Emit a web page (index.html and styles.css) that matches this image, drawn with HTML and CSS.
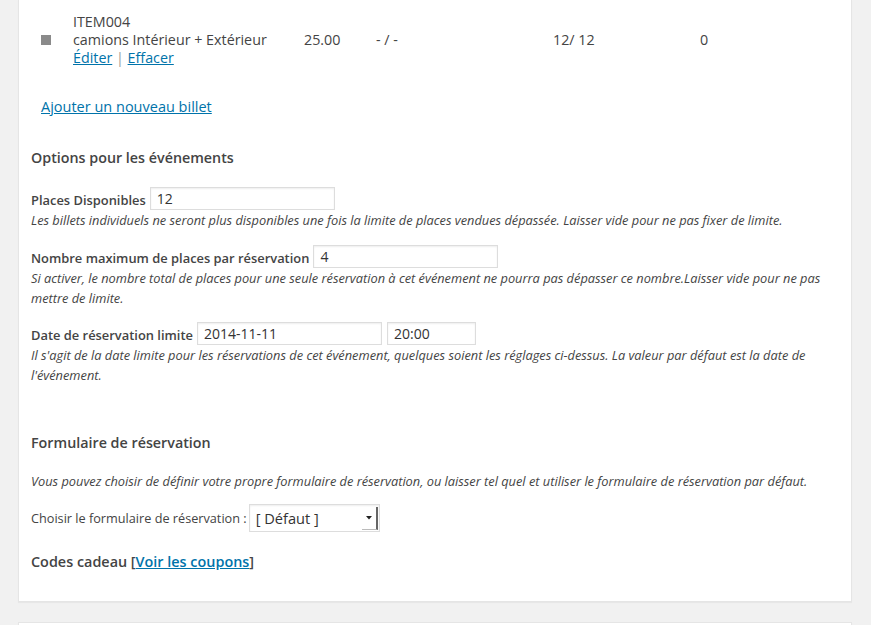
FILE: index.html
```html
<!DOCTYPE html>
<html lang="fr">
<head>
<meta charset="utf-8">
<title>Options</title>
<link rel="stylesheet" href="styles.css">
</head>
<body>
<div class="wrap">
  <div class="panel panel-cut">
    <div class="ticket-row">
      <span class="bullet"></span>
      <div class="ticket-name">
        <div>ITEM004</div>
        <div>camions Intérieur + Extérieur</div>
        <div><a href="#">Éditer</a> <span class="sep">|</span> <a href="#">Effacer</a></div>
      </div>
      <div class="col-price">25.00</div>
      <div class="col-dates">- / -</div>
      <div class="col-spaces">12/ 12</div>
      <div class="col-min">0</div>
    </div>

    <p class="add"><a href="#">Ajouter un nouveau billet</a></p>

    <h4 class="section-title">Options pour les événements</h4>

    <div class="field">
      <label class="field-label">Places Disponibles</label>
      <input class="text-input" type="text" value="12">
    </div>
    <p class="desc">Les billets individuels ne seront plus disponibles une fois la limite de places vendues dépassée. Laisser vide pour ne pas fixer de limite.</p>

    <div class="field">
      <label class="field-label">Nombre maximum de places par réservation</label>
      <input class="text-input" type="text" value="4">
    </div>
    <p class="desc">Si activer, le nombre total de places pour une seule réservation à cet événement ne pourra pas dépasser ce nombre.Laisser vide pour ne pas mettre de limite.</p>

    <div class="field field-date">
      <label class="field-label">Date de réservation limite</label>
      <input class="text-input" type="text" value="2014-11-11">
      <input class="text-input time-input" type="text" value="20:00">
    </div>
    <p class="desc">Il s'agit de la date limite pour les réservations de cet événement, quelques soient les réglages ci-dessus. La valeur par défaut est la date de l'événement.</p>

    <h4 class="section-title form-title">Formulaire de réservation</h4>
    <p class="desc form-desc">Vous pouvez choisir de définir votre propre formulaire de réservation, ou laisser tel quel et utiliser le formulaire de réservation par défaut.</p>

    <div class="select-row">
      <span class="select-label">Choisir le formulaire de réservation :</span>
      <span class="select-box">
        <span class="select-value">[ Défaut ]</span>
        <span class="select-btn"><svg width="6" height="4" viewBox="0 0 6 4"><path d="M0 0H6L3 3.5Z" fill="#222"/></svg></span>
      </span>
    </div>

    <h4 class="section-title coupons">Codes cadeau [<a href="#">Voir les coupons</a>]</h4>
  </div>
  <div class="panel panel-next"></div>
</div>
</body>
</html>
```

FILE: styles.css
```css
html, body {
  margin: 0;
  padding: 0;
}
body {
  background: #f1f1f1;
  font-family: "Open Sans", "Noto Sans", sans-serif;
  font-size: 13px;
  line-height: 18px;
  color: #444;
  height: 625px;
  overflow: hidden;
}
a {
  color: #0073aa;
  text-decoration: underline;
}
.wrap {
  padding: 0 19px 0 18px;
}
.panel {
  background: #fff;
  border: 1px solid #e5e5e5;
  box-shadow: 0 1px 1px rgba(0,0,0,0.04);
  padding: 0 12px;
}
.panel-cut {
  border-top: 0;
  padding-top: 13px;
  padding-bottom: 29px;
}
.panel-next {
  margin-top: 20px;
  height: 40px;
}
.ticket-row {
  display: grid;
  grid-template-columns: 10px 253px 72px 177px 147px 1fr;
  align-items: center;
  padding-left: 10px;
  font-size: 14.3px;
}
.bullet {
  width: 10px;
  height: 10px;
  background: #8a8a8a;
}
.ticket-name {
  padding-left: 22px;
}
.sep {
  color: #999;
}
.add {
  margin: 30px 0 0 10px;
  font-size: 14.5px;
  line-height: 20px;
}
.section-title {
  margin: 0;
  font-size: 14.3px;
  font-weight: 600;
  line-height: 20px;
}
.add + .section-title {
  margin-top: 31px;
}
.field {
  display: flex;
  align-items: center;
  gap: 4px;
}
.section-title + .field {
  margin-top: 19px;
}
.desc + .field {
  margin-top: 15px;
}
.desc + .field-date {
  margin-top: 14px;
}
.field-label {
  font-weight: 600;
  font-size: 12.9px;
  padding-top: 3px;
}
.text-input {
  width: 185px;
  height: 23px;
  box-sizing: border-box;
  border: 1px solid #ddd;
  box-shadow: inset 0 1px 2px rgba(0,0,0,0.07);
  padding: 0 6px;
  font-family: "Open Sans", "Noto Sans", sans-serif;
  font-size: 14px;
  color: #333;
  background: #fff;
  margin: 0;
  outline: none;
}
.time-input {
  width: 89px;
  margin-left: 1px;
}
.desc {
  margin: 0;
  font-style: italic;
  font-size: 12.8px;
  line-height: 20px;
}
.form-title {
  margin-top: 48px;
}
.form-desc {
  margin-top: 18px;
}
.select-row {
  display: flex;
  align-items: center;
  gap: 2px;
  margin-top: 13px;
  font-size: 12.7px;
}
.select-box {
  display: flex;
  align-items: stretch;
  width: 131px;
  height: 28px;
  box-sizing: border-box;
  border: 1px solid #ddd;
  background: #fff;
  box-shadow: inset 0 1px 2px rgba(0,0,0,0.07);
}
.select-value {
  flex: 1;
  display: flex;
  align-items: center;
  padding-left: 6px;
  font-size: 14.6px;
  color: #333;
}
.select-btn {
  width: 14px;
  margin: 2px 1px 1px 0;
  display: flex;
  align-items: center;
  justify-content: center;
  border-right: 2px solid #666;
  border-bottom: 1px solid #bbb;
  background: #fff;
}
.coupons {
  margin-top: 20px;
  font-size: 14.4px;
}
```
